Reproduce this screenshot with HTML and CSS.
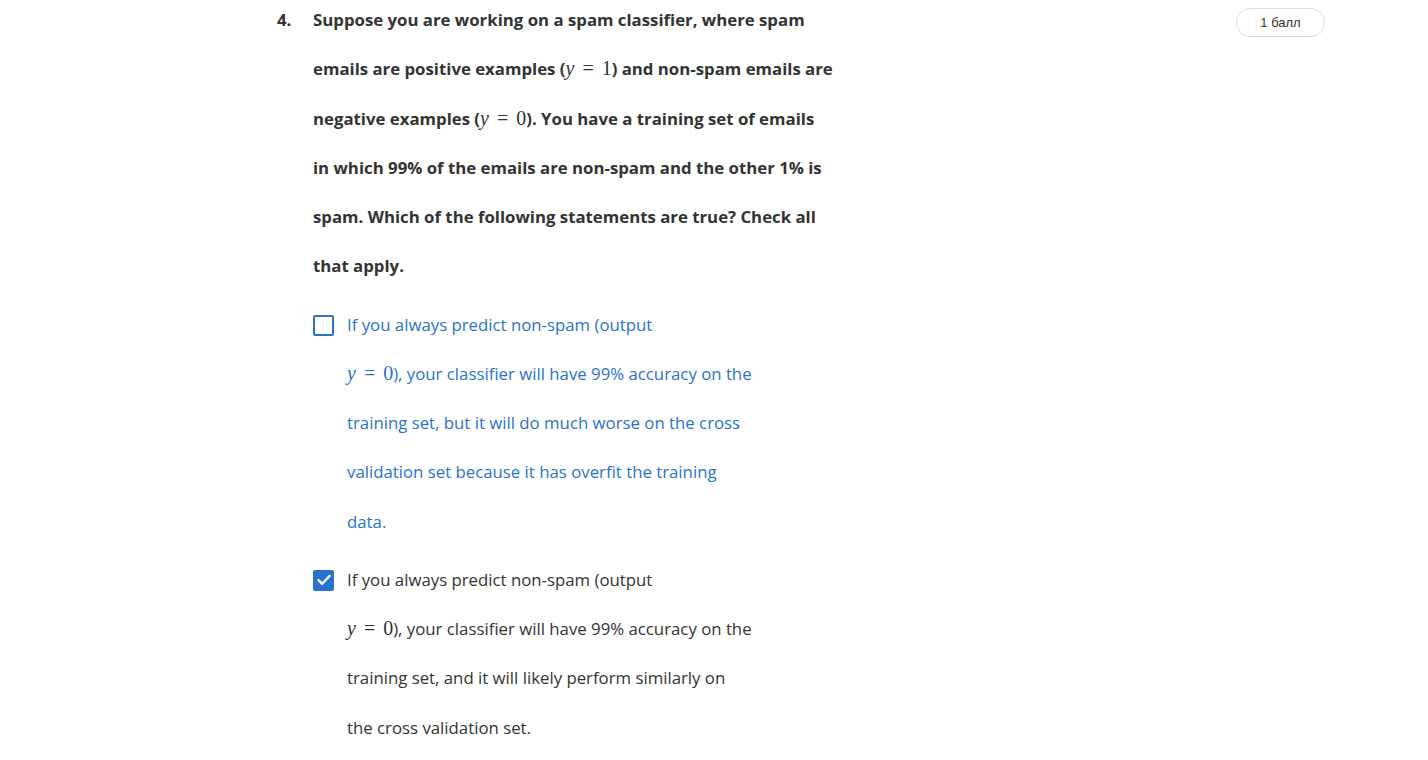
FILE: index.html
```html
<!DOCTYPE html>
<html>
<head>
<meta charset="utf-8">
<link rel="stylesheet" href="styles.css">
</head>
<body>
<div class="page">
  <div class="question">
    <div class="num">4.</div>
    <div class="body">
      <div class="prompt">
        Suppose you are working on a spam classifier, where spam<br>
        emails are positive examples (<span class="math"><i>y</i> = 1</span>) and non-spam emails are<br>
        negative examples (<span class="math"><i>y</i> = 0</span>). You have a training set of emails<br>
        in which 99% of the emails are non-spam and the other 1% is<br>
        spam. Which of the following statements are true? Check all<br>
        that apply.
      </div>
      <div class="options">
        <div class="option focused">
          <span class="box"></span>
          <div class="otext">
            If you always predict non-spam (output<br>
            <span class="math"><i>y</i> = 0</span>), your classifier will have 99% accuracy on the<br>
            training set, but it will do much worse on the cross<br>
            validation set because it has overfit the training<br>
            data.
          </div>
        </div>
        <div class="option">
          <span class="box checked">
            <svg width="14" height="12" viewBox="0 0 14 12"><path d="M1.5 6.2 L5.2 9.8 L12.5 2" fill="none" stroke="#fff" stroke-width="2.4" stroke-linecap="round" stroke-linejoin="round"/></svg>
          </span>
          <div class="otext">
            If you always predict non-spam (output<br>
            <span class="math"><i>y</i> = 0</span>), your classifier will have 99% accuracy on the<br>
            training set, and it will likely perform similarly on<br>
            the cross validation set.
          </div>
        </div>
      </div>
    </div>
    <div class="points">1 балл</div>
  </div>
</div>
</body>
</html>
```
FILE: styles.css
```css
html, body {
  margin: 0;
  padding: 0;
  background: #fff;
}
body {
  font-family: "Open Sans", "Liberation Sans", sans-serif;
  color: #333;
  font-size: 16.8px;
}
.page {
  margin-top: -5px;
}
.question {
  display: flex;
  align-items: flex-start;
  padding-left: 277px;
  padding-right: 103px;
}
.num {
  width: 36px;
  font-weight: 700;
  line-height: 49.25px;
  flex: none;
}
.body {
  flex: 1;
}
.prompt {
  font-weight: 700;
  line-height: 49.25px;
}
.math {
  font-family: "Liberation Serif", "DejaVu Serif", serif;
  font-size: 20px;
  font-weight: 400;
  word-spacing: 3px;
  line-height: 1;
}
.math i {
  font-style: italic;
}
.options {
  margin-top: 9px;
  display: flex;
  flex-direction: column;
  gap: 9px;
}
.option {
  display: flex;
  align-items: flex-start;
  gap: 13px;
}
.option.focused .otext {
  color: #2a73cc;
}
.otext {
  line-height: 49.25px;
  color: #333;
}
.box {
  flex: none;
  width: 21px;
  height: 21px;
  box-sizing: border-box;
  border: 2px solid #2a73cc;
  border-radius: 2px;
  margin-top: 15px;
  display: flex;
  align-items: center;
  justify-content: center;
}
.box.checked {
  background: #2a73cc;
}
.points {
  flex: none;
  margin-top: 13px;
  width: 89px;
  height: 29px;
  box-sizing: border-box;
  border: 1px solid #dcdcdc;
  border-radius: 14px;
  font-family: "Liberation Sans", Arial, sans-serif;
  font-size: 13px;
  color: #333;
  display: flex;
  align-items: center;
  justify-content: center;
  margin-left: auto;
}
```
